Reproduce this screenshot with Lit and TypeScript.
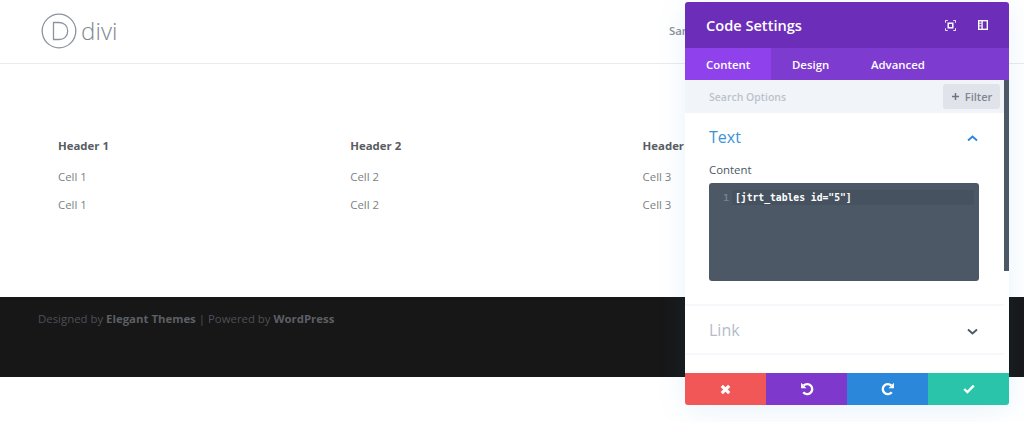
import { LitElement, html, css } from "lit";
import { customElement } from "lit/decorators.js";

@customElement("app-root")
export class AppRoot extends LitElement {
  static styles = css`
    :host { display: block; width: 1024px; height: 422px; position: relative; overflow: hidden; background: #fff; font-family: "Open Sans", sans-serif; }
    .site-header { height: 63px; border-bottom: 1px solid #e9ebef; display: flex; align-items: center; padding-left: 41px; position: relative; box-sizing: content-box; }
    .logo { display: flex; align-items: center; gap: 4px; margin-top: -1px; }
    .logo-word { font-weight: 300; font-size: 24px; line-height: 30px; color: #7d8794; letter-spacing: 0.1px; margin-top: -1px; }
    .nav { position: absolute; left: 669px; top: 23px; width: 16px; overflow: hidden; white-space: nowrap; font-size: 11.4px; font-weight: 600; line-height: 16px; color: #8a8e94; }
    .content { height: 233px; box-sizing: border-box; padding: 72px 0 0 58px; }
    .row { display: grid; grid-template-columns: repeat(3, 292.3px); height: 28px; font-size: 11.4px; line-height: 20px; color: #7c7f85; }
    .row.head { height: 31px; font-weight: 700; color: #595c62; }
    .footer { height: 80px; background: #171717; box-sizing: border-box; padding: 13px 0 0 38px; font-size: 11.4px; line-height: 18px; color: #4d5056; }
    .footer b { font-weight: 700; color: #5c5f65; }
    .panel { position: absolute; left: 685px; top: 2px; width: 324px; height: 403px; display: flex; flex-direction: column; background: #fff; border-radius: 3px; overflow: hidden; }
    .shadow { position: absolute; left: 685px; top: 2px; width: 324px; height: 403px; border-radius: 3px; box-shadow: 0 5px 30px rgba(43, 135, 218, 0.1); }
    .title { height: 46px; flex: none; background: #6c2eb9; display: flex; align-items: center; justify-content: space-between; padding: 0 21px 0 21px; color: #fff; font-size: 14.6px; font-weight: 600; }
    .title-icons { display: flex; gap: 22px; align-items: center; }
    .tabs { height: 32px; flex: none; background: #7d3bcf; display: flex; color: #fff; font-size: 11.4px; font-weight: 600; }
    .tab { display: flex; align-items: center; padding: 0 0 0 21px; box-sizing: border-box; }
    .tab.on { background: #8f42ec; width: 86px; }
    .tab.design { width: 79px; }
    .under { flex: 1; position: relative; display: flex; flex-direction: column; }
    .search { height: 33px; flex: none; background: #f1f5f9; display: flex; align-items: center; justify-content: space-between; padding: 0 9px 0 24px; font-size: 10.5px; font-weight: 600; color: #bcc2cb; }
    .filter { width: 57px; height: 25px; background: #e0e4ea; border-radius: 3px; display: flex; align-items: center; justify-content: center; gap: 5px; color: #7e8794; font-size: 11px; }
    .body { flex: 1; }
    .section { margin: 0 5px 0 0; border-bottom: 2px solid #f6f8fb; }
    .sec-head { display: flex; justify-content: space-between; align-items: center; padding: 0 26px 0 24px; font-size: 16px; line-height: 22px; }
    .sec-head svg { margin-top: 2px; }
    .text-sec { height: 193px; box-sizing: border-box; padding-top: 13px; }
    .text-sec .sec-head { color: #3c93d8; }
    .label { margin: 14px 0 0 24px; font-size: 11.4px; font-weight: 500; line-height: 16px; color: #4c5866; }
    .editor { margin: 5px 0 0 24px; width: 270px; height: 98px; box-sizing: border-box; background: #4c5866; border-radius: 3px; padding-top: 7px; font-family: "DejaVu Sans Mono", monospace; font-size: 9.7px; font-weight: 700; color: #fff; }
    .line { display: flex; align-items: center; height: 15px; }
    .gutter { width: 20px; text-align: right; color: #77818e; font-size: 9.5px; font-weight: 700; flex: none; }
    .code { flex: none; margin-left: 3px; width: 242px; height: 15px; line-height: 15px; background: #465260; padding-left: 3px; box-sizing: border-box; white-space: pre; }
    .link-sec { height: 49px; box-sizing: border-box; padding-top: 13px; }
    .link-sec .sec-head { color: #b5bcc9; }
    .scroll { position: absolute; right: 0; top: 0; width: 5px; height: 191px; background: #4c5866; }
    .actions { height: 32px; flex: none; display: grid; grid-template-columns: repeat(4, 1fr); color: #fff; }
    .actions div { display: flex; align-items: center; justify-content: center; }
    .a1 { background: #f25758; } .a2 { background: #7e38cc; } .a3 { background: #2b87da; } .a4 { background: #29c4a9; }
    svg { display: block; }
  `;

  render() {
    return html`
      <header class="site-header">
        <div class="logo">
          <svg width="36" height="36" viewBox="0 0 36 36" fill="none" stroke="#8a93a0" stroke-width="1.3">
            <circle cx="18" cy="18" r="16.8"></circle>
            <path d="M12.5 9.5h5.5c5.4 0 8.7 3.6 8.7 8.5s-3.3 8.5-8.7 8.5h-5.5z"></path>
          </svg>
          <span class="logo-word">divi</span>
        </div>
        <span class="nav">Sample Page</span>
      </header>
      <main class="content">
        <div class="row head"><span>Header 1</span><span>Header 2</span><span>Header 3</span></div>
        <div class="row"><span>Cell 1</span><span>Cell 2</span><span>Cell 3</span></div>
        <div class="row"><span>Cell 1</span><span>Cell 2</span><span>Cell 3</span></div>
      </main>
      <footer class="footer">Designed by <b>Elegant Themes</b> | Powered by <b>WordPress</b></footer>
      <div class="shadow"></div>
      <aside class="panel">
        <div class="title">
          <span>Code Settings</span>
          <div class="title-icons">
            <svg width="11" height="11" viewBox="0 0 12 12" fill="none" stroke="#fff" stroke-width="1">
              <path d="M.5 3V.5H3M9 .5h2.5V3M11.5 9v2.5H9M3 11.5H.5V9"></path>
              <rect x="3.5" y="3.5" width="5" height="5" stroke-width="1.6"></rect>
            </svg>
            <svg width="10" height="10" viewBox="0 0 11 11" fill="none">
              <rect x=".75" y=".75" width="9.5" height="9.5" stroke="#fff" stroke-width="1.5"></rect>
              <path d="M4.5 0v11" stroke="#fff" stroke-width="1.5"></path>
              <path d="M1 3.5h3M1 6.5h3" stroke="#fff" stroke-width="1"></path>
            </svg>
          </div>
        </div>
        <nav class="tabs">
          <div class="tab on">Content</div>
          <div class="tab design">Design</div>
          <div class="tab">Advanced</div>
        </nav>
        <div class="under">
          <div class="search">
            <span>Search Options</span>
            <div class="filter">
              <svg width="9" height="9" viewBox="0 0 9 9"><path d="M4.5 1v7M1 4.5h7" stroke="#6b7582" stroke-width="1.5"></path></svg>
              <span>Filter</span>
            </div>
          </div>
          <div class="body">
            <section class="section text-sec">
              <div class="sec-head">
                <span>Text</span>
                <svg width="11" height="7" viewBox="0 0 11 7" fill="none"><path d="M1 5.5l4.5-4 4.5 4" stroke="#2b87da" stroke-width="1.8"></path></svg>
              </div>
              <div class="label">Content</div>
              <div class="editor">
                <div class="line"><span class="gutter">1</span><span class="code">[jtrt_tables id="5"]</span></div>
              </div>
            </section>
            <section class="section link-sec">
              <div class="sec-head">
                <span>Link</span>
                <svg width="11" height="7" viewBox="0 0 11 7" fill="none"><path d="M1 1.5l4.5 4 4.5-4" stroke="#4c5866" stroke-width="1.8"></path></svg>
              </div>
            </section>
          </div>
          <div class="scroll"></div>
        </div>
        <div class="actions">
          <div class="a1"><svg width="11" height="11" viewBox="0 0 11 11"><path d="M1.8 1.8l7.4 7.4M9.2 1.8l-7.4 7.4" stroke="#fff" stroke-width="3.2"></path></svg></div>
          <div class="a2"><svg width="14" height="14" viewBox="0 0 13 13" fill="none"><path d="M3.4 3.2A4.7 4.7 0 1 1 3 9.6" stroke="#fff" stroke-width="2.2"></path><path d="M1 .8v5h5z" fill="#fff"></path></svg></div>
          <div class="a3"><svg width="14" height="14" viewBox="0 0 13 13" fill="none"><path d="M9.6 3.2A4.7 4.7 0 1 0 10 9.6" stroke="#fff" stroke-width="2.2"></path><path d="M12 .8v5H7z" fill="#fff"></path></svg></div>
          <div class="a4"><svg width="12" height="10" viewBox="0 0 12 10" fill="none"><path d="M1.2 5l3.2 3.1 6.4-6.4" stroke="#fff" stroke-width="2.4"></path></svg></div>
        </div>
      </aside>
    `;
  }
}
